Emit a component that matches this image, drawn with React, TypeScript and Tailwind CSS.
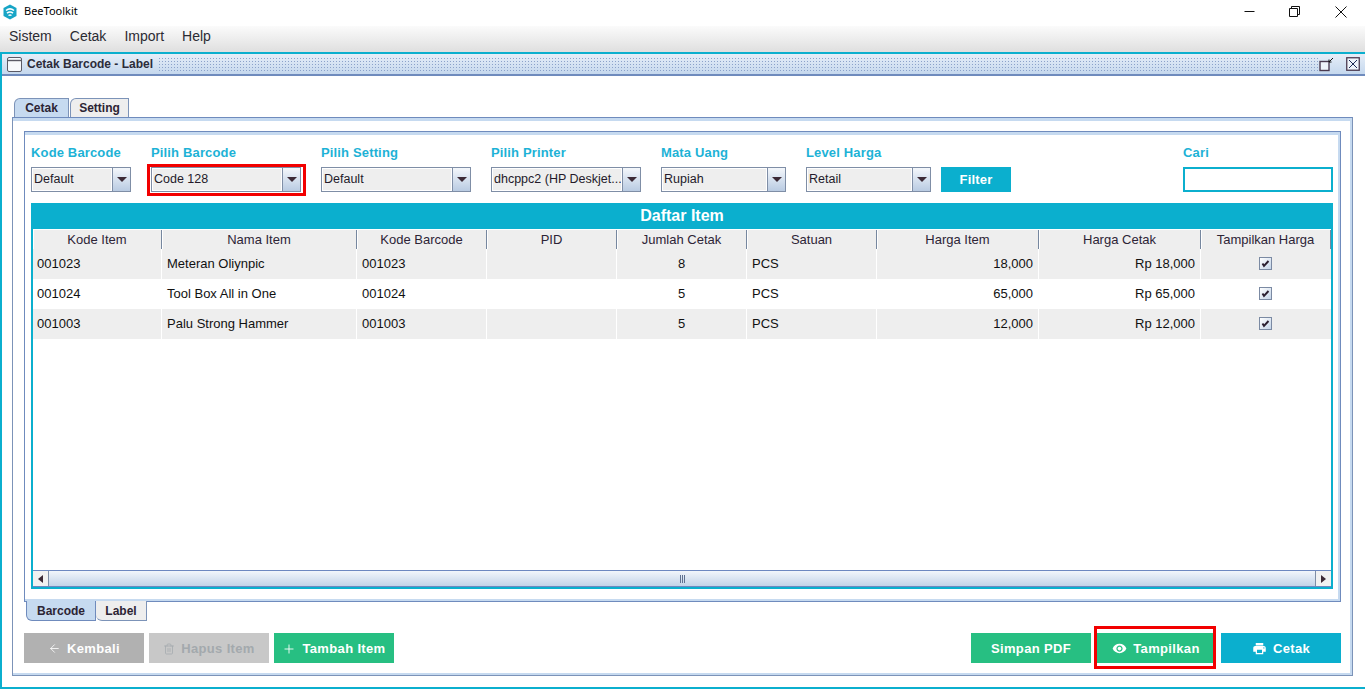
import { ReactNode } from "react";
import { ArrowLeft, Plus, Trash2 } from "lucide-react";
import { MdPrint, MdVisibility } from "react-icons/md";

const columns = [
  "Kode Item",
  "Nama Item",
  "Kode Barcode",
  "PID",
  "Jumlah Cetak",
  "Satuan",
  "Harga Item",
  "Harga Cetak",
  "Tampilkan Harga",
];

const rows = [
  ["001023", "Meteran Oliynpic", "001023", "", "8", "PCS", "18,000", "Rp 18,000"],
  ["001024", "Tool Box All in One", "001024", "", "5", "PCS", "65,000", "Rp 65,000"],
  ["001003", "Palu Strong Hammer", "001003", "", "5", "PCS", "12,000", "Rp 12,000"],
];

const gridCols =
  "grid grid-cols-[129px_195px_130px_130px_130px_130px_162px_162px_130px]";

function Logo() {
  return (
    <svg width="16" height="16" viewBox="0 0 16 16" className="ml-[2px]">
      <path d="M8 0.5 L14.5 4 V12 L8 15.5 L1.5 12 V4 Z" fill="#17a5c6" />
      <path d="M4 6.5 Q8 3.2 12 6.5" fill="none" stroke="#fff" strokeWidth="1.6" />
      <path d="M5 9.2 Q8 6.8 11 9.2" fill="none" stroke="#fff" strokeWidth="1.6" />
      <path d="M6.5 11.5 Q8 10.4 9.5 11.5" fill="none" stroke="#fff" strokeWidth="1.4" />
    </svg>
  );
}

function WindowControls() {
  return (
    <div className="ml-auto flex items-center">
      <svg width="11" height="11" viewBox="0 0 11 11" className="mr-[34px]">
        <path d="M0.5 5.5 H10.5" stroke="#111" strokeWidth="1" />
      </svg>
      <svg width="11" height="11" viewBox="0 0 11 11" className="mr-[35px]">
        <path d="M0.5 2.5 H8.5 V10.5 H0.5 Z M2.5 2.5 V0.5 H10.5 V8.5 H8.5" fill="none" stroke="#111" strokeWidth="1" />
      </svg>
      <svg width="12" height="12" viewBox="0 0 12 12" className="mr-[18px]">
        <path d="M0.5 0.5 L11.5 11.5 M11.5 0.5 L0.5 11.5" stroke="#111" strokeWidth="1" />
      </svg>
    </div>
  );
}

function FrameIcon() {
  return (
    <svg width="15" height="15" viewBox="0 0 15 15" className="ml-[7px]">
      <rect x="0.5" y="0.5" width="14" height="14" rx="1.5" fill="#f7f9fc" stroke="#5a5a66" />
      <path d="M1 3.5 H14" stroke="#5a5a66" strokeWidth="1.4" />
    </svg>
  );
}

function FrameButtons() {
  return (
    <div className="ml-auto mr-[3px] flex items-center gap-[12px]">
      <svg width="15" height="15" viewBox="0 0 15 15">
        <rect x="1" y="4.5" width="9" height="9" fill="#eef3fa" stroke="#4a3a50" strokeWidth="1.4" />
        <path d="M14 1 L10 5 M10 2.5 V5 H12.5" fill="none" stroke="#111" strokeWidth="1" />
      </svg>
      <svg width="14" height="14" viewBox="0 0 14 14">
        <rect x="0.75" y="0.75" width="12.5" height="12.5" fill="#eef3fa" stroke="#4a3a50" strokeWidth="1.3" />
        <path d="M3 3 L11 11 M11 3 L3 11" stroke="#1c2a55" strokeWidth="1" />
      </svg>
    </div>
  );
}

function Field({ label, children }: { label: string; children: ReactNode }) {
  return (
    <div className="flex flex-col gap-[7px]">
      <div className="h-[15px] text-[13px] font-bold leading-[15px] tracking-[0.15px] text-[#1db2d6]">
        {label}
      </div>
      {children}
    </div>
  );
}

function Combo({ value, width }: { value: string; width: string }) {
  return (
    <div className={`${width} flex h-[25px] border border-[#7f8ea6] bg-[#eeeeee]`}>
      <div className="flex min-w-0 flex-1 items-center overflow-hidden border border-white pl-[1px] text-[12.5px] whitespace-nowrap text-[#241a2a]">
        {value}
      </div>
      <div className="flex w-[18px] shrink-0 items-center justify-center border-l border-[#7f8ea6] bg-gradient-to-b from-[#f4f7fb] to-[#b9cbe2]">
        <div className="h-0 w-0 border-x-[5px] border-t-[5px] border-x-transparent border-t-[#3c2a36]" />
      </div>
    </div>
  );
}

function Highlight({ className }: { className: string }) {
  return <div className={`pointer-events-none absolute border-[3px] border-[#f20000] ${className}`} />;
}

function Check() {
  return (
    <div className="-mt-[1px] -ml-[1px] flex h-[13px] w-[13px] items-center justify-center border border-[#7b8aa3] bg-gradient-to-br from-[#ffffff] to-[#c4d4e8]">
      <svg width="9" height="9" viewBox="0 0 9 9">
        <path d="M1.5 4.5 L3 7 L7.5 2" fill="none" stroke="#2a1e30" strokeWidth="1.9" />
      </svg>
    </div>
  );
}

function ActionButton({
  color,
  text = "text-white",
  icon,
  label,
}: {
  color: string;
  text?: string;
  icon?: ReactNode;
  label: string;
}) {
  return (
    <div
      className={`${color} ${text} flex h-[30px] w-[120px] items-center justify-center gap-[6px] pt-[1px] text-[13px] font-bold tracking-[0.35px]`}
    >
      {icon}
      {label}
    </div>
  );
}

function ItemTable() {
  return (
    <div className="mt-[11px] flex flex-1 flex-col border-x-2 border-b-2 border-[#0bafce]">
      <div className="flex h-[26px] shrink-0 items-center justify-center bg-[#0bafce] text-[16px] font-bold text-white">
        Daftar Item
      </div>
      <div className={`${gridCols} mt-[1px] h-[19px] shrink-0`}>
        {columns.map((c) => (
          <div
            key={c}
            className="flex items-center justify-center border-r border-b border-[#76879f] bg-[#eeeeee] text-[13px] whitespace-nowrap text-[#2d2436] shadow-[inset_1px_0_0_#fff]"
          >
            {c}
          </div>
        ))}
      </div>
      <div className="flex-1">
        {rows.map((row, i) => (
          <div key={row[0]} className={`${gridCols} h-[30px]`}>
            {row.map((cell, j) => (
              <div
                key={j}
                className={`flex items-center border-r border-white pr-[5px] text-[13px] whitespace-nowrap text-[#111] ${
                  i % 2 === 0 ? "bg-[#eeeeee]" : "bg-white"
                } ${j === 0 ? "pl-[4px]" : "pl-[5px]"} ${j === 4 ? "justify-center" : j >= 6 ? "justify-end" : ""}`}
              >
                {cell}
              </div>
            ))}
            <div className={`flex items-center justify-center ${i % 2 === 0 ? "bg-[#eeeeee]" : "bg-white"}`}>
              <Check />
            </div>
          </div>
        ))}
      </div>
      <div className="flex h-[17px] shrink-0 border-y border-[#6d88c0] bg-white">
        <div className="flex w-[16px] items-center justify-center border-r border-[#7f8ea6] bg-[#f1f1f1]">
          <div className="h-0 w-0 border-y-[4px] border-r-[5px] border-y-transparent border-r-[#3c2a36]" />
        </div>
        <div className="flex flex-1 items-center justify-center gap-[1px] bg-gradient-to-b from-[#f2f6fb] to-[#c3d3e8]">
          <div className="h-[8px] w-[1px] bg-[#5f7190]" />
          <div className="h-[8px] w-[1px] bg-[#5f7190]" />
          <div className="h-[8px] w-[1px] bg-[#5f7190]" />
        </div>
        <div className="flex w-[16px] items-center justify-center border-l border-[#7f8ea6] bg-[#f1f1f1]">
          <div className="h-0 w-0 border-y-[4px] border-l-[5px] border-y-transparent border-l-[#3c2a36]" />
        </div>
      </div>
    </div>
  );
}

export default function App() {
  return (
    <div className="flex h-[689px] w-[1365px] flex-col overflow-hidden bg-white font-['Liberation_Sans',sans-serif]">
      <div className="flex h-[26px] shrink-0 items-center bg-white pb-[3px]">
        <Logo />
        <span className="ml-[6px] font-['Noto_Sans',sans-serif] text-[11px] text-black">BeeToolkit</span>
        <WindowControls />
      </div>

      <div className="flex h-[26px] shrink-0 items-center gap-[18px] bg-gradient-to-b from-[#fbfbfb] to-[#dfdfdf] pb-[5px] pl-[9px] text-[14px] text-[#2b2b33]">
        <span>Sistem</span>
        <span>Cetak</span>
        <span>Import</span>
        <span>Help</span>
      </div>

      <div className="flex flex-1 flex-col border-t-2 border-b-2 border-l-2 border-[#0bafce] pb-[11px]">
        <div className="flex h-[22px] shrink-0 items-center border-b-2 border-[#6f8bbd] bg-gradient-to-b from-[#e6eef8] to-[#c5d8ee]">
          <div className="-ml-[2px] flex w-full items-center">
            <FrameIcon />
            <span className="ml-[5px] text-[12px] font-bold text-[#2c2c3a]">Cetak Barcode - Label</span>
            <div className="ml-[5px] h-[14px] flex-1 bg-[radial-gradient(#8ba2ca_0.7px,transparent_0.8px)] bg-[length:3px_3px]" />
            <FrameButtons />
          </div>
        </div>

        <div className="ml-[12px] mt-[22px] flex h-[19px] shrink-0 text-[12px] font-bold text-[#2c2434]">
          <div className="flex w-[55px] items-center justify-center rounded-tl-[6px] border-x border-t border-[#7c93b8] bg-[#c6daf0]">
            Cetak
          </div>
          <div className="ml-[1px] flex w-[59px] items-center justify-center rounded-tl-[6px] border-x border-t border-[#7c93b8] bg-[#eeeeee]">
            Setting
          </div>
        </div>

        <div className="ml-[10px] flex w-[1341px] flex-1 flex-col border border-[#7c93b8] border-t-[#6f8bbd] bg-[#c6daf0] pt-[3px] pr-[2px] pb-[2px]">
          <div className="flex flex-1 flex-col bg-white pt-[10px] pr-[9px] pb-[10px] pl-[11px]">
            <div className="flex h-[471px] flex-col border border-[#6f8bbd] bg-[#c6daf0] pt-[3px] pr-[2px] pb-[2px]">
              <div className="flex flex-1 flex-col bg-white pt-[10px] pr-[5px] pb-[10px] pl-[6px]">
                <div className="flex items-end gap-5">
                  <Field label="Kode Barcode">
                    <Combo value="Default" width="w-[100px]" />
                  </Field>
                  <div className="relative">
                    <Field label="Pilih Barcode">
                      <Combo value="Code 128" width="w-[150px]" />
                    </Field>
                    <Highlight className="right-[-5px] bottom-[-4px] left-[-4px] h-[32px]" />
                  </div>
                  <Field label="Pilih Setting">
                    <Combo value="Default" width="w-[150px]" />
                  </Field>
                  <Field label="Pilih Printer">
                    <Combo value="dhcppc2 (HP Deskjet..." width="w-[150px]" />
                  </Field>
                  <Field label="Mata Uang">
                    <Combo value="Rupiah" width="w-[125px]" />
                  </Field>
                  <Field label="Level Harga">
                    <Combo value="Retail" width="w-[125px]" />
                  </Field>
                  <div className="-ml-[10px] flex h-[25px] w-[70px] items-center justify-center bg-[#0bafce] text-[13px] font-bold tracking-[0.2px] text-white">
                    Filter
                  </div>
                  <div className="ml-auto">
                    <Field label="Cari">
                      <div className="h-[25px] w-[150px] border-2 border-[#0bafce] bg-white" />
                    </Field>
                  </div>
                </div>
                <ItemTable />
              </div>
            </div>

            <div className="-mt-[1px] ml-[2px] flex h-[20px] shrink-0 text-[12px] font-bold text-[#2c2434]">
              <div className="flex w-[70px] items-center justify-center rounded-bl-[6px] border border-t-0 border-[#6f8bbd] bg-[#c6daf0]">
                Barcode
              </div>
              <div className="flex w-[51px] items-center justify-center rounded-bl-[6px] border border-l-0 border-t-0 border-[#7c93b8] bg-[#eeeeee]">
                Label
              </div>
            </div>

            <div className="mt-[12px] flex justify-between">
              <div className="flex gap-[5px]">
                <ActionButton color="bg-[#b1b1b1]" icon={<ArrowLeft size={13} strokeWidth={1.5} />} label="Kembali" />
                <ActionButton
                  color="bg-[#c8c8c8]"
                  text="text-[#a3a9ad]"
                  icon={<Trash2 size={12} strokeWidth={1.5} />}
                  label="Hapus Item"
                />
                <ActionButton color="bg-[#27bf82]" icon={<Plus size={14} strokeWidth={1.5} />} label="Tambah Item" />
              </div>
              <div className="flex gap-[5px]">
                <ActionButton color="bg-[#27bf82]" label="Simpan PDF" />
                <div className="relative">
                  <ActionButton color="bg-[#27bf82]" icon={<MdVisibility size={15} />} label="Tampilkan" />
                  <Highlight className="-top-[7px] right-[0px] -bottom-[6px] -left-[2px]" />
                </div>
                <ActionButton color="bg-[#0bafce]" icon={<MdPrint size={15} />} label="Cetak" />
              </div>
            </div>
          </div>
        </div>
      </div>
    </div>
  );
}
